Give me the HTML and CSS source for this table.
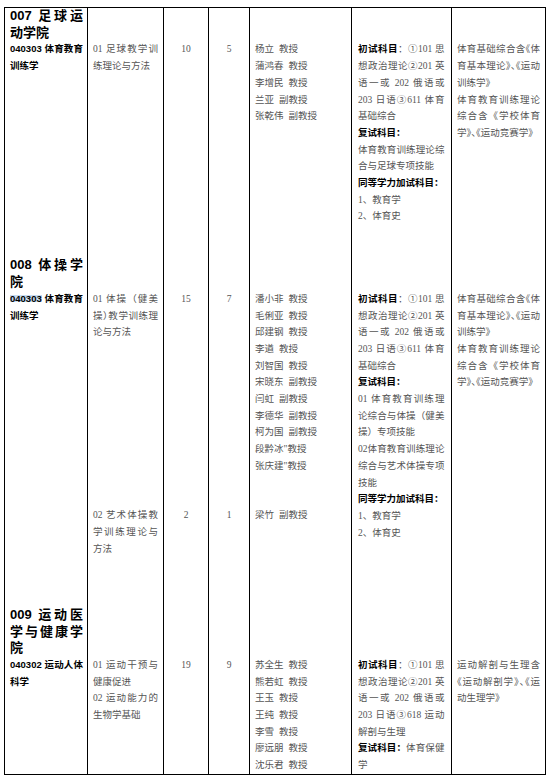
FILE: index.html
```html
<!DOCTYPE html>
<html lang="zh-CN">
<head>
<meta charset="utf-8">
<title>招生专业目录</title>
<link rel="stylesheet" href="styles.css">
</head>
<body>
<table class="cat">
  <colgroup>
    <col class="c1"><col class="c2"><col class="c3"><col class="c4"><col class="c5"><col class="c6"><col class="c7">
  </colgroup>
  <tbody>
    <tr class="head">
      <td class="college">007 足球运动学院</td>
      <td></td><td></td><td></td><td></td><td></td><td></td>
    </tr>
    <tr class="r007">
      <td class="major">040303 体育教育训练学</td>
      <td class="txt dir">01 足球教学训练理论与方法</td>
      <td class="num">10</td>
      <td class="num">5</td>
      <td class="tch">
        <div>杨立 教授</div>
        <div>蒲鸿春 教授</div>
        <div>李增民 教授</div>
        <div>兰亚 副教授</div>
        <div>张乾伟 副教授</div>
      </td>
      <td class="txt exam">
        <div><b>初试科目</b>：①101 思想政治理论②201 英语一或 202 俄语或 203 日语③611 体育基础综合</div>
        <div><b>复试科目：</b></div>
        <div>体育教育训练理论综合与足球专项技能</div>
        <div><b>同等学力加试科目：</b></div>
        <div>1、教育学</div>
        <div>2、体育史</div>
      </td>
      <td class="txt ref">
        <div>体育基础综合含<span class="op">《</span>体育基本理论<span class="cp">》</span><span class="cp">、</span><span class="op">《</span>运动训练学》</div>
        <div>体育教育训练理论综合含《学校体育学<span class="cp">》</span><span class="cp">、</span><span class="op">《</span>运动竞赛学》</div>
      </td>
    </tr>
    <tr class="head">
      <td class="college">008 体操学院</td>
      <td></td><td></td><td></td><td></td><td></td><td></td>
    </tr>
    <tr class="r008a">
      <td class="major" rowspan="2"><span class="hl">040303</span> 体育教育训练学</td>
      <td class="txt dir">01 体操（健美操<span class="cp">）</span>教学训练理论与方法</td>
      <td class="num">15</td>
      <td class="num">7</td>
      <td class="tch">
        <div>潘小非 教授</div>
        <div>毛俐亚 教授</div>
        <div>邱建钢 教授</div>
        <div>李遒 教授</div>
        <div>刘智国 教授</div>
        <div>宋晓东 副教授</div>
        <div>闫虹 副教授</div>
        <div>李德华 副教授</div>
        <div>柯为国 副教授</div>
        <div>段黔冰"教授</div>
        <div>张庆建"教授</div>
      </td>
      <td class="txt exam" rowspan="2">
        <div><b>初试科目</b>：①101 思想政治理论②201 英语一或 202 俄语或 203 日语③611 体育基础综合</div>
        <div><b>复试科目：</b></div>
        <div>01 体育教育训练理论综合与体操（健美操）专项技能</div>
        <div>02体育教育训练理论综合与艺术体操专项技能</div>
        <div><b>同等学力加试科目：</b></div>
        <div>1、教育学</div>
        <div>2、体育史</div>
      </td>
      <td class="txt ref" rowspan="2">
        <div>体育基础综合含<span class="op">《</span>体育基本理论<span class="cp">》</span><span class="cp">、</span><span class="op">《</span>运动训练学》</div>
        <div>体育教育训练理论综合含《学校体育学<span class="cp">》</span><span class="cp">、</span><span class="op">《</span>运动竞赛学》</div>
      </td>
    </tr>
    <tr class="r008b">
      <td class="txt dir">02 艺术体操教学训练理论与方法</td>
      <td class="num">2</td>
      <td class="num">1</td>
      <td class="tch"><div>梁竹 副教授</div></td>
    </tr>
    <tr class="head">
      <td class="college">009 运动医学与健康学院</td>
      <td></td><td></td><td></td><td></td><td></td><td></td>
    </tr>
    <tr class="r009">
      <td class="major">040302 运动人体科学</td>
      <td class="txt dir">
        <div>01 运动干预与健康促进</div>
        <div>02 运动能力的生物学基础</div>
      </td>
      <td class="num">19</td>
      <td class="num">9</td>
      <td class="tch">
        <div>苏全生 教授</div>
        <div>熊若虹 教授</div>
        <div>王玉 教授</div>
        <div>王纯 教授</div>
        <div>李雪 教授</div>
        <div>廖远朋 教授</div>
        <div>沈乐君 教授</div>
      </td>
      <td class="txt exam">
        <div><b>初试科目</b>：①101 思想政治理论②201 英语一或 202 俄语或 203 日语③618 运动解剖与生理</div>
        <div><b>复试科目：</b>体育保健学</div>
      </td>
      <td class="txt ref">
        <div>运动解剖与生理含<span class="op">《</span>运动解剖学<span class="cp">》</span><span class="cp">、</span><span class="op">《</span>运动生理学》</div>
      </td>
    </tr>
  </tbody>
</table>
</body>
</html>
```

FILE: styles.css
```css
html, body {
  margin: 0;
  padding: 0;
  background: #fff;
}

body {
  width: 552px;
  height: 778px;
  overflow: hidden;
}

.cat {
  border-collapse: collapse;
  table-layout: fixed;
  width: 542px;
  margin: 7px 0 0 4px;
  border-top: 1px solid #000;
  border-bottom: 1px solid #000;
  text-spacing-trim: space-all;
  text-autospace: no-autospace;
}

.c1 { width: 83px; }
.c2 { width: 76px; }
.c3 { width: 45px; }
.c4 { width: 41px; }
.c5 { width: 102px; }
.c6 { width: 100px; }
.c7 { width: 94px; }

.cat td {
  border-left: 1px solid #000;
  border-right: 1px solid #000;
  padding: 0 5px;
  vertical-align: top;
  font-family: "Liberation Serif", "Noto Sans CJK SC", serif;
  font-size: 9.5px;
  line-height: 16.7px;
  color: #555;
  text-align: justify;
}

.cat td.college {
  padding: 0 4px 0 5px;
  font-family: "Liberation Sans", "Noto Sans CJK SC", sans-serif;
  font-size: 13px;
  font-weight: 700;
  color: #000;
}

.cat td.major {
  padding: 0 4px 0 5px;
  font-family: "Liberation Sans", "Noto Sans CJK SC", sans-serif;
  font-size: 9.5px;
  font-weight: 700;
  color: #000;
}

.cat td.num {
  text-align: center;
}

.cat td.tch {
  text-align: left;
  word-spacing: 2.5px;
}

.cat td.exam {
  padding: 0 6.5px 0 6px;
}

.cat td.ref {
  padding: 0 5px;
}

.cat b {
  font-weight: 700;
  color: #000;
}

.hl {
  background: linear-gradient(transparent 18%, #c7dbf0 18%, #c7dbf0 86%, transparent 86%);
}

/* compressed full-width punctuation, as in the printed catalogue */
.cp {
  letter-spacing: -0.5em;
}

.op {
  margin-left: -0.5em;
}

.r007 { height: 216px; }
.r008a { height: 216.5px; }
.r008b { height: 99.5px; }
```
